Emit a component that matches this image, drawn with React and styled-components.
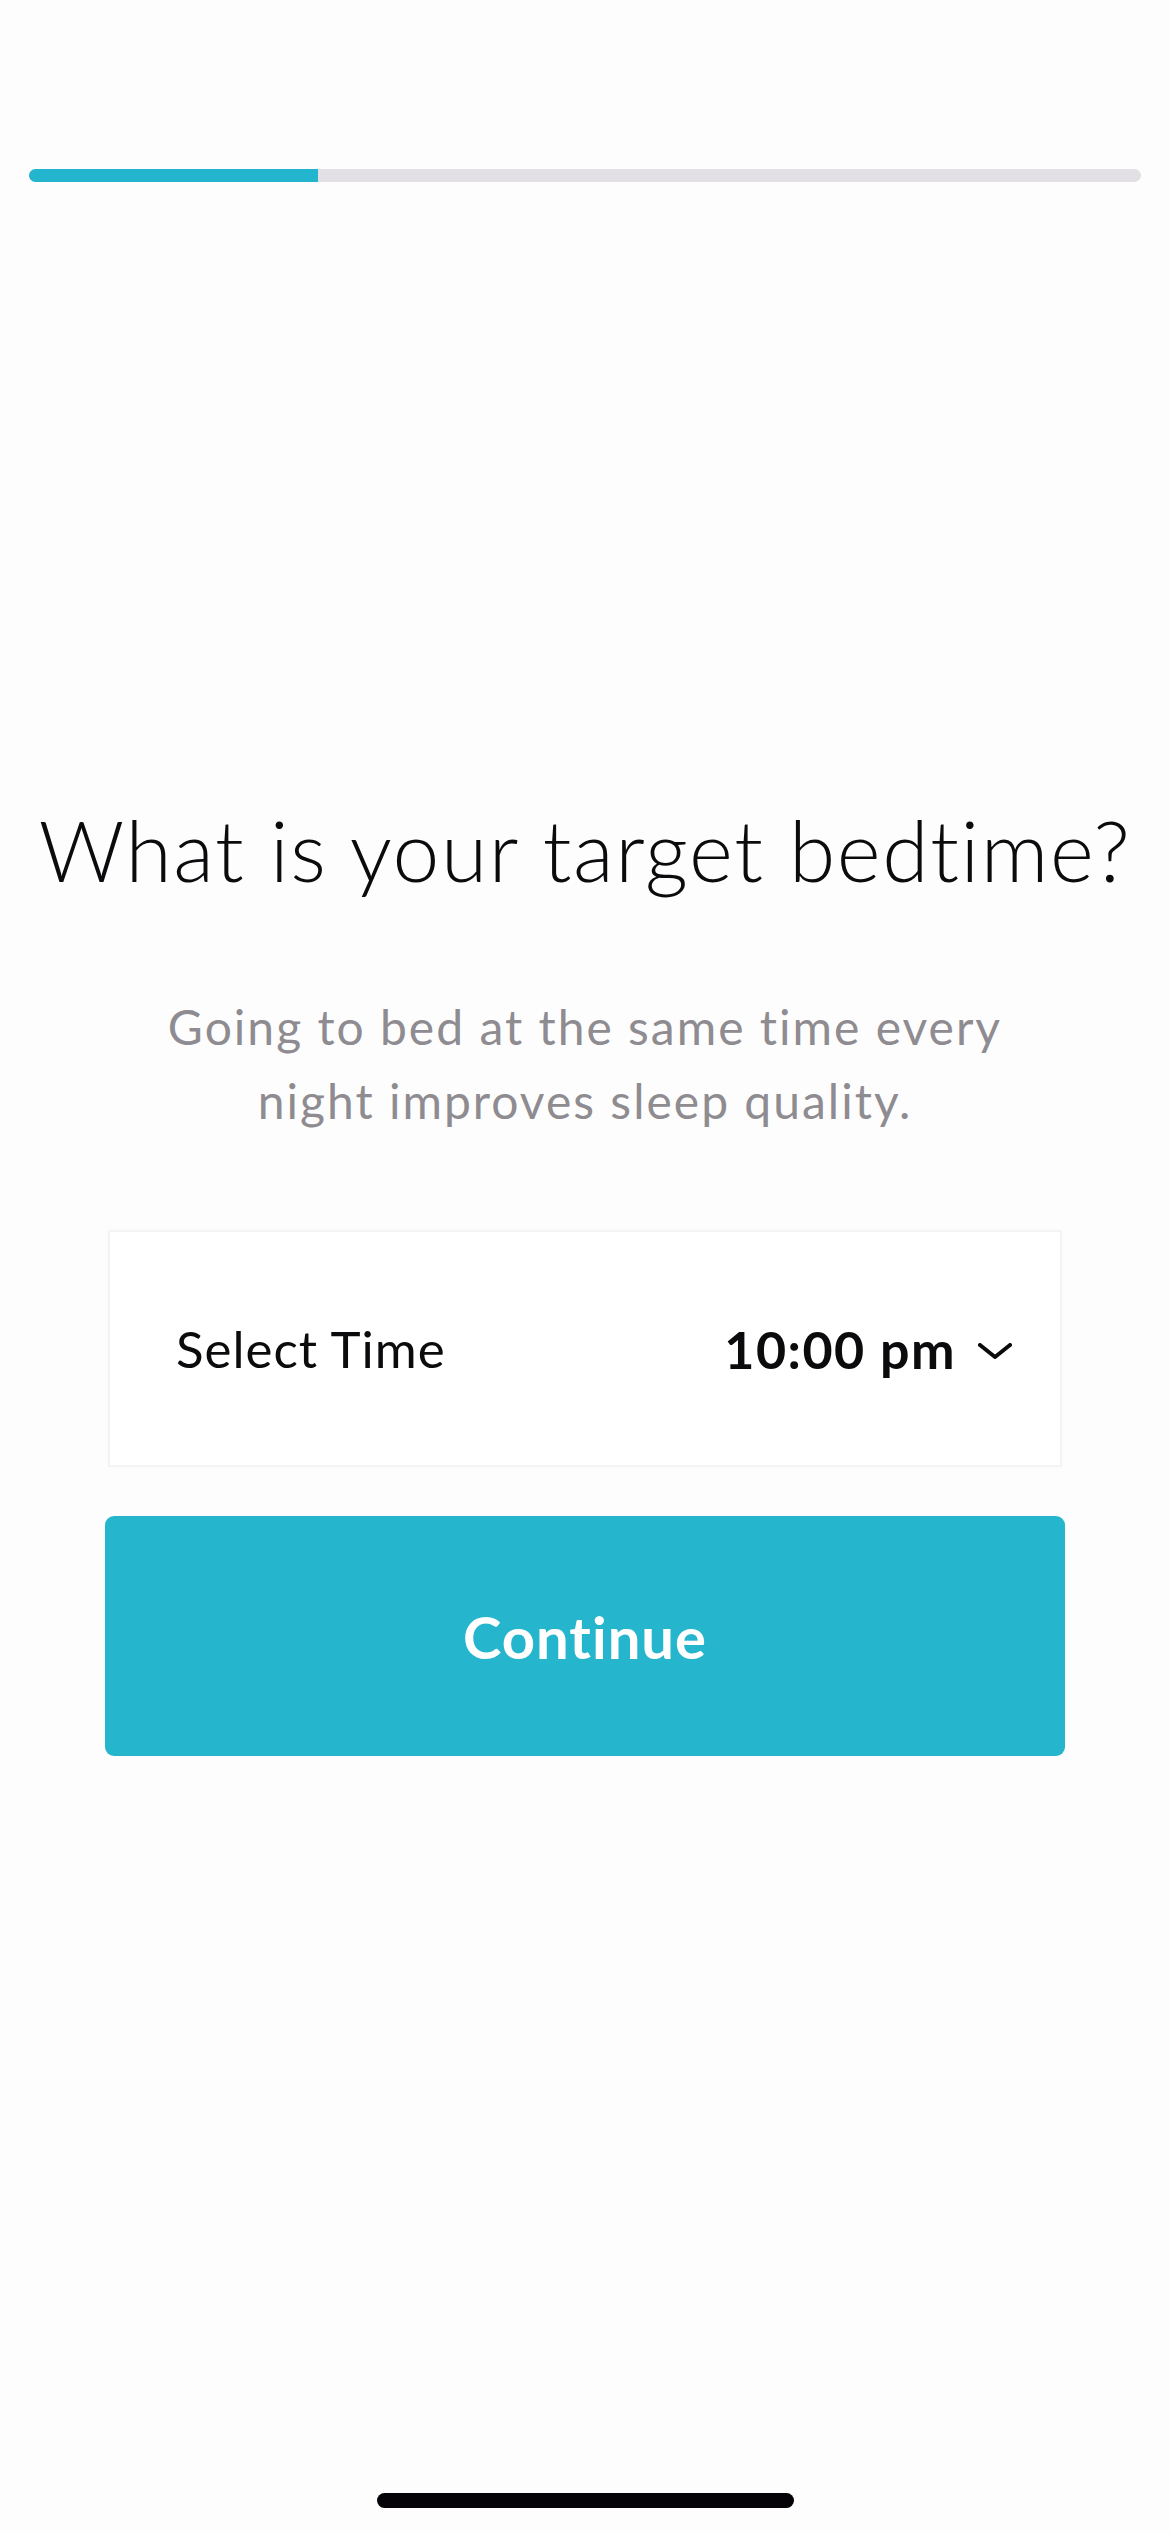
import React from "react";
import styled, { createGlobalStyle } from "styled-components";

const Global = createGlobalStyle`
  html, body {
    margin: 0;
    padding: 0;
    background: #fefdfe;
  }
  body {
    font-family: Lato, "Liberation Sans", sans-serif;
    -webkit-font-smoothing: antialiased;
  }
`;

export default function App() {
  return (
    <>
      <Global />
      <Screen>
        <Progress>
          <ProgressFill style={{ width: `${(289 / 1112) * 100}%` }} />
        </Progress>

        <Title>What is your target bedtime?</Title>
        <Subtitle>
          Going to bed at the same time every
          <br />
          night improves sleep quality.
        </Subtitle>

        <TimeCard>
          <Label>Select Time</Label>
          <Value>
            10:00 pm
            <Chevron viewBox="0 0 34 16" aria-hidden="true">
              <path d="M2 2 L17 14 L32 2" />
            </Chevron>
          </Value>
        </TimeCard>

        <ContinueButton>Continue</ContinueButton>

        <HomeIndicator />
      </Screen>
    </>
  );
}

const Screen = styled.div`
  width: 1170px;
  height: 2532px;
  display: flex;
  flex-direction: column;
  align-items: center;
  background: #fefdfe;
  box-sizing: border-box;
  padding-top: 169px;
`;

const Progress = styled.div`
  width: 1112px;
  height: 13px;
  border-radius: 7px;
  background: #e2e0e4;
  overflow: hidden;
`;

const ProgressFill = styled.div`
  height: 100%;
  background: #23b5cd;
`;

const Title = styled.h1`
  margin: 618px 0 0;
  font-family: Lato, "Liberation Sans", sans-serif;
  font-weight: 300;
  font-size: 84px;
  line-height: 100px;
  color: #0b0a0c;
  letter-spacing: 1.6px;
  white-space: nowrap;
`;

const Subtitle = styled.p`
  margin: 90px 0 0;
  text-align: center;
  font-size: 48px;
  line-height: 74px;
  font-weight: 400;
  letter-spacing: 2px;
  color: #8e8c90;
`;

const TimeCard = styled.div`
  margin-top: 92px;
  width: 954px;
  height: 237px;
  box-sizing: border-box;
  display: flex;
  align-items: center;
  justify-content: space-between;
  padding: 0 48px 0 66px;
  background: #ffffff;
  border: 2px solid #f5f3f6;
  box-shadow: 0 0 4px rgba(0, 0, 0, 0.02);
`;

const Label = styled.span`
  font-size: 51px;
  font-weight: 400;
  letter-spacing: 1px;
  color: #0b0a0c;
`;

const Value = styled.span`
  display: flex;
  align-items: center;
  gap: 22px;
  font-size: 52px;
  font-weight: 700;
  letter-spacing: 1.5px;
  color: #0b0a0c;
`;

const Chevron = styled.svg`
  width: 34px;
  height: 16px;
  margin-top: 4px;
  fill: none;
  stroke: #0b0a0c;
  stroke-width: 4;
  stroke-linecap: round;
  stroke-linejoin: round;
`;

const ContinueButton = styled.button`
  margin-top: 49px;
  width: 960px;
  height: 240px;
  border: none;
  border-radius: 9px;
  background: #25b5cd;
  color: #ffffff;
  font-family: Lato, "Liberation Sans", sans-serif;
  font-size: 58px;
  font-weight: 700;
  letter-spacing: 1px;
  cursor: pointer;
`;

const HomeIndicator = styled.div`
  margin-top: auto;
  margin-bottom: 24px;
  width: 417px;
  height: 15px;
  border-radius: 8px;
  background: #050308;
`;
